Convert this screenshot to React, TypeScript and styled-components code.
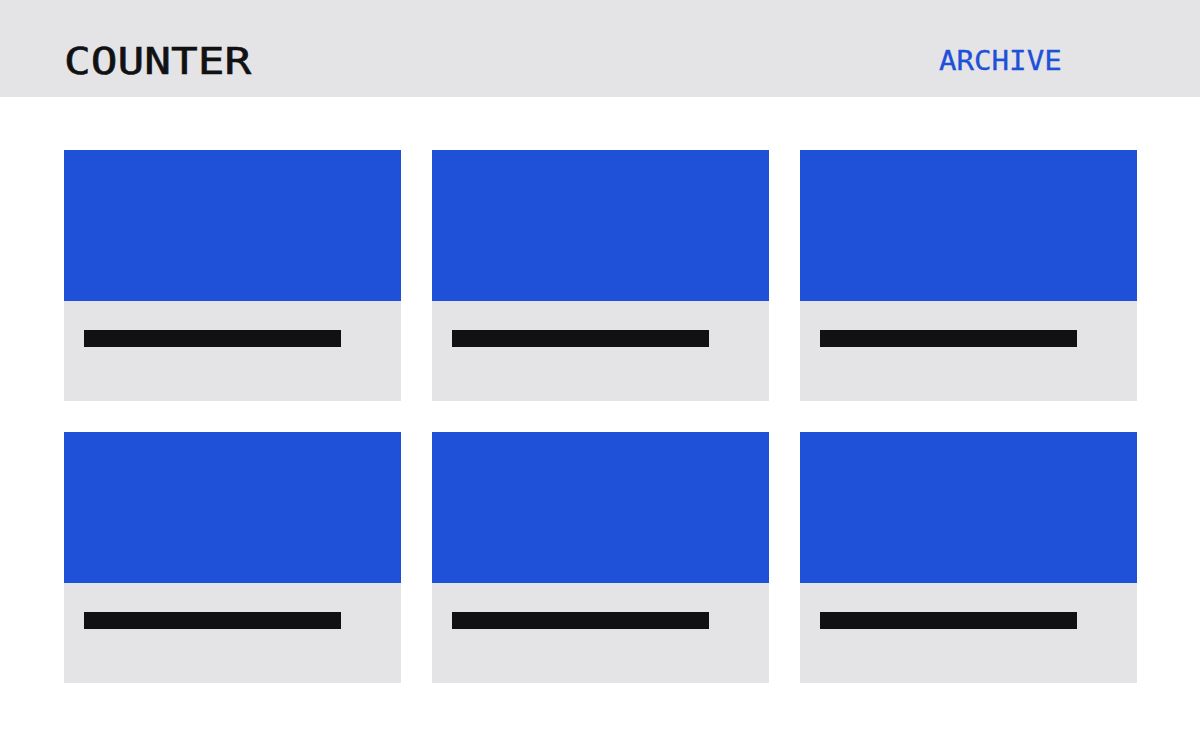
import React from "react";
import styled, { createGlobalStyle } from "styled-components";

const GlobalStyle = createGlobalStyle`
  html, body {
    margin: 0;
    padding: 0;
    background: #ffffff;
  }
  body {
    font-family: "DejaVu Sans Mono", "Liberation Mono", monospace;
  }
`;

const Page = styled.div`
  width: 1200px;
  min-height: 750px;
  background: #ffffff;
`;

const Header = styled.header`
  height: 97px;
  box-sizing: border-box;
  padding: 0 138px 0 64px;
  background: #e4e4e7;
  display: flex;
  align-items: center;
  justify-content: space-between;
`;

/* Wide blocky wordmark: a mono face stretched horizontally */
const Logo = styled.h1`
  margin: 0;
  font-family: "DejaVu Sans Mono", "Liberation Mono", monospace;
  font-size: 37px;
  font-weight: 400;
  letter-spacing: 0;
  line-height: 1;
  color: #111113;
  -webkit-text-stroke: 0.6px #111113;
  transform-origin: left center;
  transform: translateY(13px) scaleX(1.2);
`;

const NavLink = styled.a`
  font-family: "DejaVu Sans Mono", "Liberation Mono", monospace;
  font-size: 27px;
  font-weight: 400;
  letter-spacing: 0;
  line-height: 1;
  color: #1f50d8;
  text-decoration: none;
  -webkit-text-stroke: 0.3px #1f50d8;
  transform-origin: right center;
  transform: translateY(12px) scaleX(1.08);
`;

const Grid = styled.main`
  display: grid;
  grid-template-columns: repeat(3, 337px);
  column-gap: 31px;
  row-gap: 31px;
  padding: 53px 64px 0;
`;

const Card = styled.article`
  display: flex;
  flex-direction: column;
`;

const Cover = styled.div`
  height: 151px;
  background: #1f50d8;
`;

const Caption = styled.div`
  height: 100px;
  box-sizing: border-box;
  padding: 29px 20px 0;
  background: #e4e4e7;
`;

const TitleBar = styled.div<{ $width: number }>`
  height: 17px;
  width: ${(p) => p.$width}px;
  background: #111113;
`;

const cards = Array.from({ length: 6 }, (_, i) => ({ id: i, titleWidth: 257 }));

export default function App() {
  return (
    <Page>
      <GlobalStyle />
      <Header>
        <Logo>COUNTER</Logo>
        <NavLink href="#">ARCHIVE</NavLink>
      </Header>
      <Grid>
        {cards.map((c) => (
          <Card key={c.id}>
            <Cover />
            <Caption>
              <TitleBar $width={c.titleWidth} />
            </Caption>
          </Card>
        ))}
      </Grid>
    </Page>
  );
}
